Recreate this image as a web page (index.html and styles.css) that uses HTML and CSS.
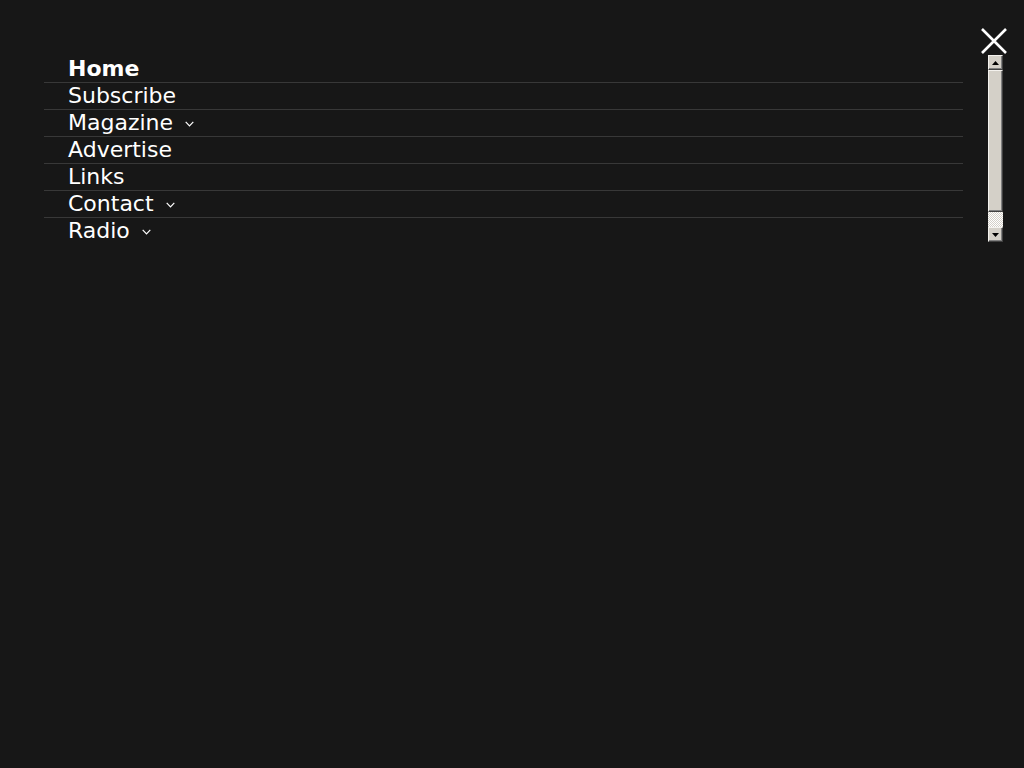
FILE: index.html
```html
<!DOCTYPE html>
<html>
<head>
<meta charset="utf-8">
<link rel="stylesheet" href="styles.css">
</head>
<body>
<div class="overlay">
  <div class="top">
    <button class="close" aria-label="Close">
      <svg width="26" height="26" viewBox="0 0 26 26"><path d="M1 1 L25 25 M25 1 L1 25" stroke="#fff" stroke-width="2.6" fill="none"/></svg>
    </button>
  </div>
  <div class="menu">
    <ul class="list">
      <li class="bold">Home</li>
      <li>Subscribe</li>
      <li>Magazine <svg class="chev" width="9" height="6" viewBox="0 0 9 6"><path d="M0.7 0.8 L4.5 4.8 L8.3 0.8" stroke="#fff" stroke-width="1.2" fill="none"/></svg></li>
      <li>Advertise</li>
      <li>Links</li>
      <li>Contact <svg class="chev" width="9" height="6" viewBox="0 0 9 6"><path d="M0.7 0.8 L4.5 4.8 L8.3 0.8" stroke="#fff" stroke-width="1.2" fill="none"/></svg></li>
      <li>Radio <svg class="chev" width="9" height="6" viewBox="0 0 9 6"><path d="M0.7 0.8 L4.5 4.8 L8.3 0.8" stroke="#fff" stroke-width="1.2" fill="none"/></svg></li>
    </ul>
    <div class="sb">
      <div class="sb-btn"><svg width="7" height="4" viewBox="0 0 7 4"><path d="M3.5 0 L7 4 L0 4 Z" fill="#000"/></svg></div>
      <div class="sb-thumb"></div>
      <div class="sb-track"></div>
      <div class="sb-btn"><svg width="7" height="4" viewBox="0 0 7 4"><path d="M0 0 L7 0 L3.5 4 Z" fill="#000"/></svg></div>
    </div>
  </div>
</div>
</body>
</html>
```
FILE: styles.css
```css
html, body {
  margin: 0;
  padding: 0;
  background: #171717;
  height: 100%;
}
body {
  font-family: "DejaVu Sans", sans-serif;
  color: #fff;
}
.overlay {
  display: flex;
  flex-direction: column;
}
.top {
  display: flex;
  justify-content: flex-end;
  padding: 28px 17px 0 0;
  height: 26px;
}
.close {
  background: none;
  border: 0;
  padding: 0;
  width: 26px;
  height: 26px;
  display: block;
  cursor: pointer;
}
.close svg { display: block; }
.menu {
  display: flex;
  align-items: flex-start;
  padding-left: 44px;
  margin-top: 2px;
}
.list {
  list-style: none;
  margin: 0;
  padding: 0;
  width: 919px;
  height: 188px;
  overflow: hidden;
}
.list li {
  font-size: 22px;
  line-height: 26px;
  height: 26px;
  padding-left: 24px;
  border-bottom: 1px solid #383838;
  white-space: nowrap;
}
.list li.bold { font-weight: bold; }
.chev {
  margin-left: 5px;
  vertical-align: 3px;
}
.sb {
  margin-left: 25px;
  margin-top: -1px;
  width: 15px;
  height: 187px;
  display: flex;
  flex-direction: column;
}
.sb-btn, .sb-thumb {
  box-sizing: border-box;
  background: #d4d0c8;
  border: 1px solid;
  border-color: #f4f2ee #404040 #404040 #f4f2ee;
  box-shadow: inset -1px -1px 0 #808080;
}
.sb-btn {
  height: 15px;
  display: flex;
  align-items: center;
  justify-content: center;
}
.sb-btn svg { display: block; }
.sb-thumb {
  flex: 1;
}
.sb-track {
  height: 15px;
  background-color: #d4d0c8;
  background-image: repeating-conic-gradient(#fff 0 25%, #d4d0c8 0 50%);
  background-size: 2px 2px;
}
```
